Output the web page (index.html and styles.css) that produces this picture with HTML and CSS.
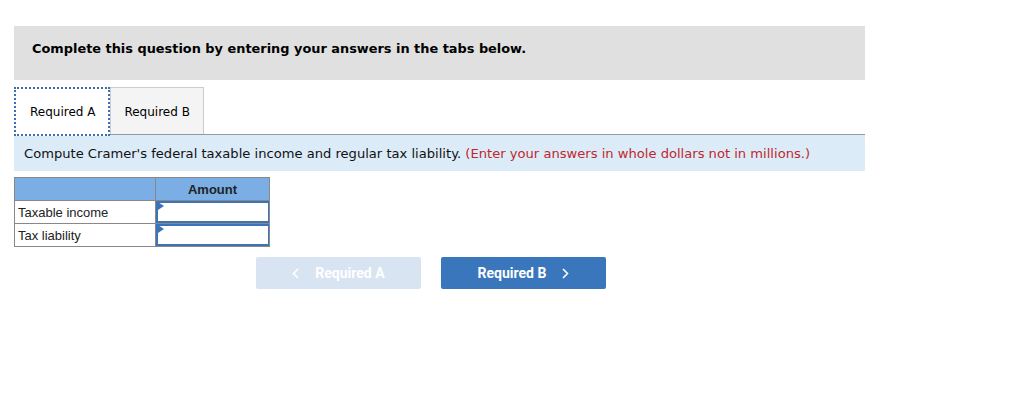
FILE: index.html
```html
<!DOCTYPE html>
<html>
<head>
<meta charset="utf-8">
<link rel="stylesheet" href="styles.css">
</head>
<body>
<div class="wrap">
  <div class="banner">Complete this question by entering your answers in the tabs below.</div>
  <div class="tabs">
    <div class="tab active">Required A</div>
    <div class="tab">Required B</div>
  </div>
  <div class="instr">Compute Cramer's federal taxable income and regular tax liability. <span class="red">(Enter your answers in whole dollars not in millions.)</span></div>
  <table class="grid">
    <tr><th class="blank"></th><th class="amt">Amount</th></tr>
    <tr><td class="lbl">Taxable income</td><td class="inp"><div class="box"></div></td></tr>
    <tr><td class="lbl">Tax liability</td><td class="inp"><div class="box"></div></td></tr>
  </table>
  <div class="nav">
    <div class="btn prev"><svg class="chev l" width="7" height="11" viewBox="0 0 7 11"><path d="M6 1 L1.5 5.5 L6 10" fill="none" stroke="#fff" stroke-width="1.6"/></svg>Required A</div>
    <div class="btn next">Required B<svg class="chev r" width="7" height="11" viewBox="0 0 7 11"><path d="M1 1 L5.5 5.5 L1 10" fill="none" stroke="#fff" stroke-width="1.6"/></svg></div>
  </div>
</div>
</body>
</html>
```
FILE: styles.css
```css
body { margin: 0; background: #fff; }
.wrap { padding: 26px 0 0 14px; width: 851px; }
.banner {
  background: #e0e0e0;
  height: 54px;
  box-sizing: border-box;
  padding: 15px 0 0 18px;
  font-family: "DejaVu Sans", Verdana, sans-serif;
  font-weight: bold;
  font-size: 12.9px;
  color: #000;
}
.tabs { display: flex; margin-top: 7px; border-bottom: 1px solid #999; height: 47px; }
.tab {
  font-family: "DejaVu Sans", Verdana, sans-serif;
  font-size: 12px;
  color: #000;
  box-sizing: border-box;
  height: 47px;
  padding: 17px 13px 0 13px;
  background: #f4f4f4;
  border: 1px solid #ccc;
  border-bottom: none;
  white-space: nowrap;
}
.tab.active {
  background: #fff;
  border: 2px dotted #3b6fb0;
  height: 49px;
  padding: 16px 13px 0 14px;
  position: relative;
  z-index: 1;
}
.instr {
  background: #dcebf8;
  height: 36px;
  box-sizing: border-box;
  padding: 11px 0 0 10px;
  font-family: "DejaVu Sans", Verdana, sans-serif;
  font-size: 13.1px;
  color: #111;
}
.red { color: #c1272d; }
.grid {
  margin-top: 6px;
  border-collapse: collapse;
  font-family: "Liberation Sans", Arial, sans-serif;
  font-size: 13px;
}
.grid th, .grid td { border: 1px solid #888; padding: 0; height: 22px; }
.grid th { background: #7aaee5; color: #222; font-weight: bold; }
.blank { width: 140px; }
.amt { width: 113px; }
.lbl { padding-left: 3px !important; color: #222; text-align: left; }
.box {
  height: 22px;
  box-sizing: border-box;
  border: 2px solid #3b74b8;
  border-right-width: 1px;
  position: relative;
}
.box::before {
  content: "";
  position: absolute;
  left: 0; top: 0;
  border-left: 6px solid #3b74b8;
  border-top: 4px solid transparent;
  border-bottom: 4px solid transparent;
  margin-top: -1px;
}
.nav { display: flex; gap: 20px; margin: 10px 0 0 242px; }
.btn {
  width: 165px; height: 32px;
  border-radius: 2px;
  display: flex; align-items: center; justify-content: center;
  font-family: Roboto, "Liberation Sans", sans-serif;
  font-weight: bold;
  font-size: 14px;
  color: #fff;
}
.prev { background: #d8e4f1; }
.next { background: #3a76bb; }
.chev.l { margin-right: 16px; }
.chev.r { margin-left: 16px; }
```
